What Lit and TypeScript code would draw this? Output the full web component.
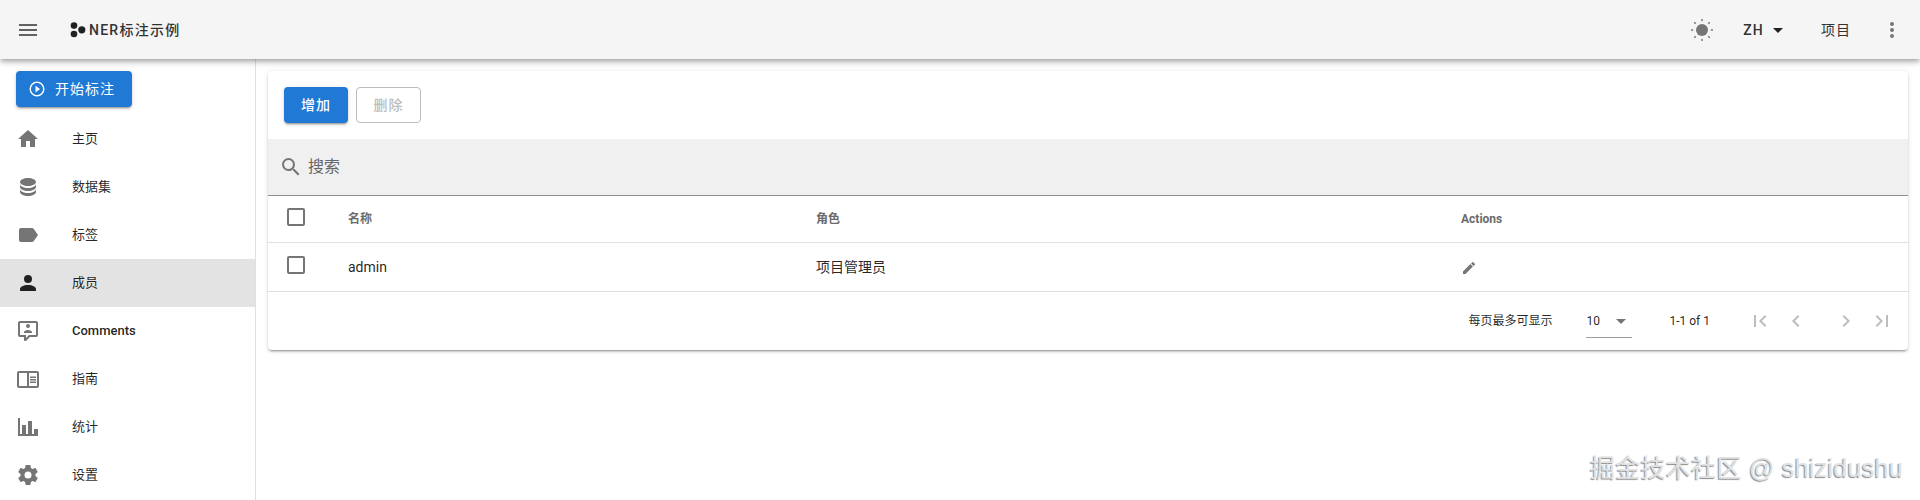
import { LitElement, html, css, svg } from "lit";
import { customElement } from "lit/decorators.js";

const P = {
  menu: "M3,6H21V8H3V6M3,11H21V13H3V11M3,16H21V18H3V16Z",
  home: "M10,20V14H14V20H19V12H22L12,3L2,12H5V20H10Z",
  database: "M12,3C7.58,3 4,4.79 4,7C4,9.21 7.58,11 12,11C16.42,11 20,9.21 20,7C20,4.79 16.42,3 12,3M4,9V12C4,14.21 7.58,16 12,16C16.42,16 20,14.21 20,12V9C20,11.21 16.42,13 12,13C7.58,13 4,11.21 4,9M4,14V17C4,19.21 7.58,21 12,21C16.42,21 20,19.21 20,17V14C20,16.21 16.42,18 12,18C7.58,18 4,16.21 4,14Z",
  label: "M17.63,5.84C17.27,5.33 16.67,5 16,5H5A2,2 0 0,0 3,7V17A2,2 0 0,0 5,19H16C16.67,19 17.27,18.66 17.63,18.15L22,12L17.63,5.84Z",
  account: "M12,4A4,4 0 0,1 16,8A4,4 0 0,1 12,12A4,4 0 0,1 8,8A4,4 0 0,1 12,4M12,14C16.42,14 20,15.79 20,18V20H4V18C4,15.79 7.58,14 12,14Z",
  comment: "M9,22A1,1 0 0,1 8,21V18H4A2,2 0 0,1 2,16V4C2,2.89 2.9,2 4,2H20A2,2 0 0,1 22,4V16A2,2 0 0,1 20,18H13.9L10.2,21.71C10,21.9 9.75,22 9.5,22V22H9M10,16V19.08L13.08,16H20V4H4V16H10M16,14H8V13C8,11.67 10.67,11 12,11C13.33,11 16,11.67 16,13V14M12,5A2,2 0 0,1 14,7A2,2 0 0,1 12,9A2,2 0 0,1 10,7A2,2 0 0,1 12,5Z",
  book: "M21 4H3a2 2 0 0 0-2 2v13a2 2 0 0 0 2 2h18a2 2 0 0 0 2-2V6a2 2 0 0 0-2-2zM3 19V6h8v13H3zm18 0h-8V6h8v13zm-7-9.5h6V11h-6zm0 2.5h6v1.5h-6zm0 2.5h6V16h-6z",
  chart: "M22,21H2V3H4V19H6V10H10V19H12V6H16V19H18V14H22V21Z",
  cog: "M12,15.5A3.5,3.5 0 0,1 8.5,12A3.5,3.5 0 0,1 12,8.5A3.5,3.5 0 0,1 15.5,12A3.5,3.5 0 0,1 12,15.5M19.43,12.97C19.47,12.65 19.5,12.33 19.5,12C19.5,11.67 19.47,11.34 19.43,11L21.54,9.37C21.73,9.22 21.78,8.95 21.66,8.73L19.66,5.27C19.54,5.05 19.27,4.96 19.05,5.05L16.56,6.05C16.04,5.66 15.5,5.32 14.87,5.07L14.5,2.42C14.46,2.18 14.25,2 14,2H10C9.75,2 9.54,2.18 9.5,2.42L9.13,5.07C8.5,5.32 7.96,5.66 7.44,6.05L4.95,5.05C4.73,4.96 4.46,5.05 4.34,5.27L2.34,8.73C2.21,8.95 2.27,9.22 2.46,9.37L4.57,11C4.53,11.34 4.5,11.67 4.5,12C4.5,12.33 4.53,12.65 4.57,12.97L2.46,14.63C2.27,14.78 2.21,15.05 2.34,15.27L4.34,18.73C4.46,18.95 4.73,19.03 4.95,18.95L7.44,17.94C7.96,18.34 8.5,18.68 9.13,18.93L9.5,21.58C9.54,21.82 9.75,22 10,22H14C14.25,22 14.46,21.82 14.5,21.58L14.87,18.93C15.5,18.67 16.04,18.34 16.56,17.94L19.05,18.95C19.27,19.03 19.54,18.95 19.66,18.73L21.66,15.27C21.78,15.05 21.73,14.78 21.54,14.63L19.43,12.97Z",
  search: "M9.5,3A6.5,6.5 0 0,1 16,9.5C16,11.11 15.41,12.59 14.44,13.73L14.71,14H15.5L20.5,19L19,20.5L14,15.5V14.71L13.73,14.44C12.59,15.41 11.11,16 9.5,16A6.5,6.5 0 0,1 3,9.5A6.5,6.5 0 0,1 9.5,3M9.5,5C7,5 5,7 5,9.5C5,12 7,14 9.5,14C12,14 14,12 14,9.5C14,7 12,5 9.5,5Z",
  box: "M19,3H5C3.89,3 3,3.89 3,5V19A2,2 0 0,0 5,21H19A2,2 0 0,0 21,19V5C21,3.89 20.1,3 19,3M19,5V19H5V5H19Z",
  pencil: "M20.71,7.04C21.1,6.65 21.1,6 20.71,5.63L18.37,3.29C18,2.9 17.35,2.9 16.96,3.29L15.12,5.12L18.87,8.87M3,17.25V21H6.75L17.81,9.93L14.06,6.18L3,17.25Z",
  down: "M7,10L12,15L17,10H7Z",
  first: "M18.41,16.59L13.82,12L18.41,7.41L17,6L11,12L17,18L18.41,16.59M6,6H8V18H6V6Z",
  left: "M15.41,16.58L10.83,12L15.41,7.41L14,6L8,12L14,18L15.41,16.58Z",
  right: "M8.59,16.58L13.17,12L8.59,7.41L10,6L16,12L10,18L8.59,16.58Z",
  last: "M5.59,7.41L10.18,12L5.59,16.59L7,18L13,12L7,6L5.59,7.41M16,6H18V18H16V6Z",
  dots: "M12,16A2,2 0 0,1 14,18A2,2 0 0,1 12,20A2,2 0 0,1 10,18A2,2 0 0,1 12,16M12,10A2,2 0 0,1 14,12A2,2 0 0,1 12,14A2,2 0 0,1 10,12A2,2 0 0,1 12,10M12,4A2,2 0 0,1 14,6A2,2 0 0,1 12,8A2,2 0 0,1 10,6A2,2 0 0,1 12,4Z",
  play: "M10,16.5L16,12L10,7.5V16.5M12,20C7.59,20 4,16.41 4,12C4,7.59 7.59,4 12,4C16.41,4 20,7.59 20,12C20,16.41 16.41,20 12,20M12,2A10,10 0 0,0 2,12A10,10 0 0,0 12,22A10,10 0 0,0 22,12A10,10 0 0,0 12,2Z",
};

const icon = (d: string, cls = "") =>
  html`<svg class="ic ${cls}" viewBox="0 0 24 24"><path d=${d}></path></svg>`;

const sun = html`<svg class="ic" viewBox="0 0 24 24">
  <circle cx="12" cy="12" r="6"></circle>
  ${[0, 45, 90, 135, 180, 225, 270, 315].map(
    (a) => svg`<rect x="11.3" y="1" width="1.4" height="2.2" transform="rotate(${a} 12 12)"></rect>`
  )}
</svg>`;

const NAV: [string, string, boolean?][] = [
  [P.home, "主页"],
  [P.database, "数据集"],
  [P.label, "标签"],
  [P.account, "成员", true],
  [P.comment, "Comments"],
  [P.book, "指南"],
  [P.chart, "统计"],
  [P.cog, "设置"],
];

@customElement("app-root")
export class AppRoot extends LitElement {
  static styles = css`
    :host {
      display: block;
      position: relative;
      height: 500px;
      overflow: hidden;
      background: #fff;
      font-family: Roboto, "Noto Sans CJK SC", sans-serif;
      line-height: 20px;
      color: rgba(0, 0, 0, 0.87);
    }
    .ic { width: 24px; height: 24px; fill: #757575; flex: none; display: block; }
    .topbar {
      position: relative;
      z-index: 2;
      height: 59px;
      background: #f5f5f5;
      display: flex;
      align-items: center;
      padding: 0 16px;
      box-shadow: 0 2px 4px -1px rgba(0,0,0,.2), 0 4px 5px 0 rgba(0,0,0,.14), 0 1px 10px 0 rgba(0,0,0,.12);
    }
    .topbar .ic.menu { margin-right: 30px; fill: #616161; }
    .logo { width: 16px; height: 16px; fill: #212121; flex: none; margin-right: 3px; }
    .brand { font-size: 14px; font-weight: 500; letter-spacing: 1.25px; color: #333; }
    .spacer { flex: 1; }
    .lang { font-size: 14px; font-weight: 500; letter-spacing: 1.25px; display: flex; align-items: center; margin-left: 29px; color: #333; }
    .lang .ic { fill: #212121; margin-left: 2px; margin-right: -4px; }
    .proj { font-size: 14px; letter-spacing: 1px; margin-left: 35px; color: #333; }
    .dots { margin-left: 29px; }
    .body { display: flex; height: 441px; }
    .side {
      width: 255px;
      border-right: 1px solid #e0e0e0;
      flex: none;
    }
    .start {
      margin: 12px 0 8px 16px;
      width: 116px;
      height: 36px;
      box-sizing: border-box;
      border-radius: 4px;
      background: #2079d4;
      color: #fff;
      display: flex;
      align-items: center;
      padding-left: 12px;
      gap: 9px;
      font-size: 14px;
      letter-spacing: 1px;
      box-shadow: 0 3px 1px -2px rgba(0,0,0,.2), 0 2px 2px 0 rgba(0,0,0,.14), 0 1px 5px 0 rgba(0,0,0,.12);
    }
    .start .ic { width: 18px; height: 18px; fill: #fff; }
    .item {
      height: 48px;
      display: flex;
      align-items: center;
      padding-left: 16px;
      font-size: 13px;
      gap: 32px;
    }
    .item.latin { font-weight: 500; }
    .item.on { background: #e3e3e3; }
    .item.on .ic { fill: #212121; }
    .main { flex: 1; padding: 12px 12px 0 12px; min-width: 0; }
    .card {
      background: #fff;
      border-radius: 4px;
      box-shadow: 0 3px 1px -2px rgba(0,0,0,.2), 0 2px 2px 0 rgba(0,0,0,.14), 0 1px 5px 0 rgba(0,0,0,.12);
    }
    .tools { display: flex; gap: 8px; padding: 16px; height: 36px; }
    .btn {
      height: 36px;
      box-sizing: border-box;
      border-radius: 4px;
      display: flex;
      align-items: center;
      justify-content: center;
      font-size: 14px;
      font-weight: 500;
      letter-spacing: 1px;
    }
    .btn.add {
      width: 64px;
      background: #2079d4;
      color: #fff;
      box-shadow: 0 3px 1px -2px rgba(0,0,0,.2), 0 2px 2px 0 rgba(0,0,0,.14), 0 1px 5px 0 rgba(0,0,0,.12);
    }
    .btn.del { width: 65px; border: 1px solid #bdbdbd; color: #bdbdbd; }
    .search {
      height: 56px;
      background: #f0f0f0;
      border-bottom: 1px solid #8c8c8c;
      display: flex;
      align-items: center;
      padding-left: 11px;
      gap: 5px;
      font-size: 16px;
      color: #666;
    }
    .row {
      display: grid;
      grid-template-columns: 80px 468px 645px 1fr;
      align-items: center;
      border-bottom: 1px solid #e0e0e0;
      font-size: 14px;
    }
    .row.head { height: 46px; font-size: 12px; font-weight: 700; color: #6b6b6b; }
    .row.data { height: 48px; }
    .check { padding-left: 16px; margin-top: -4px; }
    .pen { width: 16px; height: 16px; margin-top: 1px; }
    .foot {
      height: 58px;
      display: flex;
      align-items: center;
      font-size: 12px;
      padding-right: 14px;
      justify-content: flex-end;
    }
    .select {
      margin-left: 34px;
      width: 46px;
      height: 32px;
      border-bottom: 1px solid #9e9e9e;
      display: flex;
      align-items: center;
      justify-content: space-between;
    }
    .select .ic { margin-right: -1px; }
    .range { margin-left: 37px; margin-right: 38px; }
    .pg { display: flex; gap: 12px; }
    .pg .ic { fill: #bdbdbd; }
    .pg .gap { margin-left: 14px; }
    .mark {
      position: absolute;
      right: 17px;
      bottom: 15px;
      font-family: "Liberation Sans", "Noto Sans CJK SC", sans-serif;
      font-size: 25px;
      line-height: 34px;
      letter-spacing: 0.3px;
      color: #e2e2e2;
      text-shadow: -1px 1px 1px #8a8a8a;
      white-space: nowrap;
    }
  `;

  render() {
    return html`
      <header class="topbar">
        ${icon(P.menu, "menu")}
        <svg class="logo" viewBox="0 0 16 16">
          <circle cx="4" cy="3.6" r="3.3"></circle>
          <circle cx="4" cy="12" r="3.3"></circle>
          <circle cx="11.8" cy="7.8" r="3.6"></circle>
        </svg>
        <span class="brand">NER标注示例</span>
        <div class="spacer"></div>
        ${sun}
        <div class="lang">ZH${icon(P.down)}</div>
        <div class="proj">项目</div>
        <div class="dots">${icon(P.dots)}</div>
      </header>
      <div class="body">
        <nav class="side">
          <div class="start">${icon(P.play)}<span>开始标注</span></div>
          ${NAV.map(
            ([d, t, on]) =>
              html`<div class="item ${on ? "on" : ""} ${t === "Comments" ? "latin" : ""}">${icon(d)}<span>${t}</span></div>`
          )}
        </nav>
        <main class="main">
          <section class="card">
            <div class="tools">
              <div class="btn add">增加</div>
              <div class="btn del">删除</div>
            </div>
            <div class="search">${icon(P.search)}<span>搜索</span></div>
            <div class="row head">
              <div class="check">${icon(P.box)}</div>
              <div>名称</div><div>角色</div><div>Actions</div>
            </div>
            <div class="row data">
              <div class="check">${icon(P.box)}</div>
              <div>admin</div><div>项目管理员</div>
              <div>${icon(P.pencil, "pen")}</div>
            </div>
            <div class="foot">
              <span>每页最多可显示</span>
              <div class="select"><span>10</span>${icon(P.down)}</div>
              <span class="range">1-1 of 1</span>
              <div class="pg">
                ${icon(P.first)}${icon(P.left)}
                ${icon(P.right, "gap")}${icon(P.last)}
              </div>
            </div>
          </section>
        </main>
      </div>
      <div class="mark">掘金技术社区 @ shizidushu</div>
    `;
  }
}
